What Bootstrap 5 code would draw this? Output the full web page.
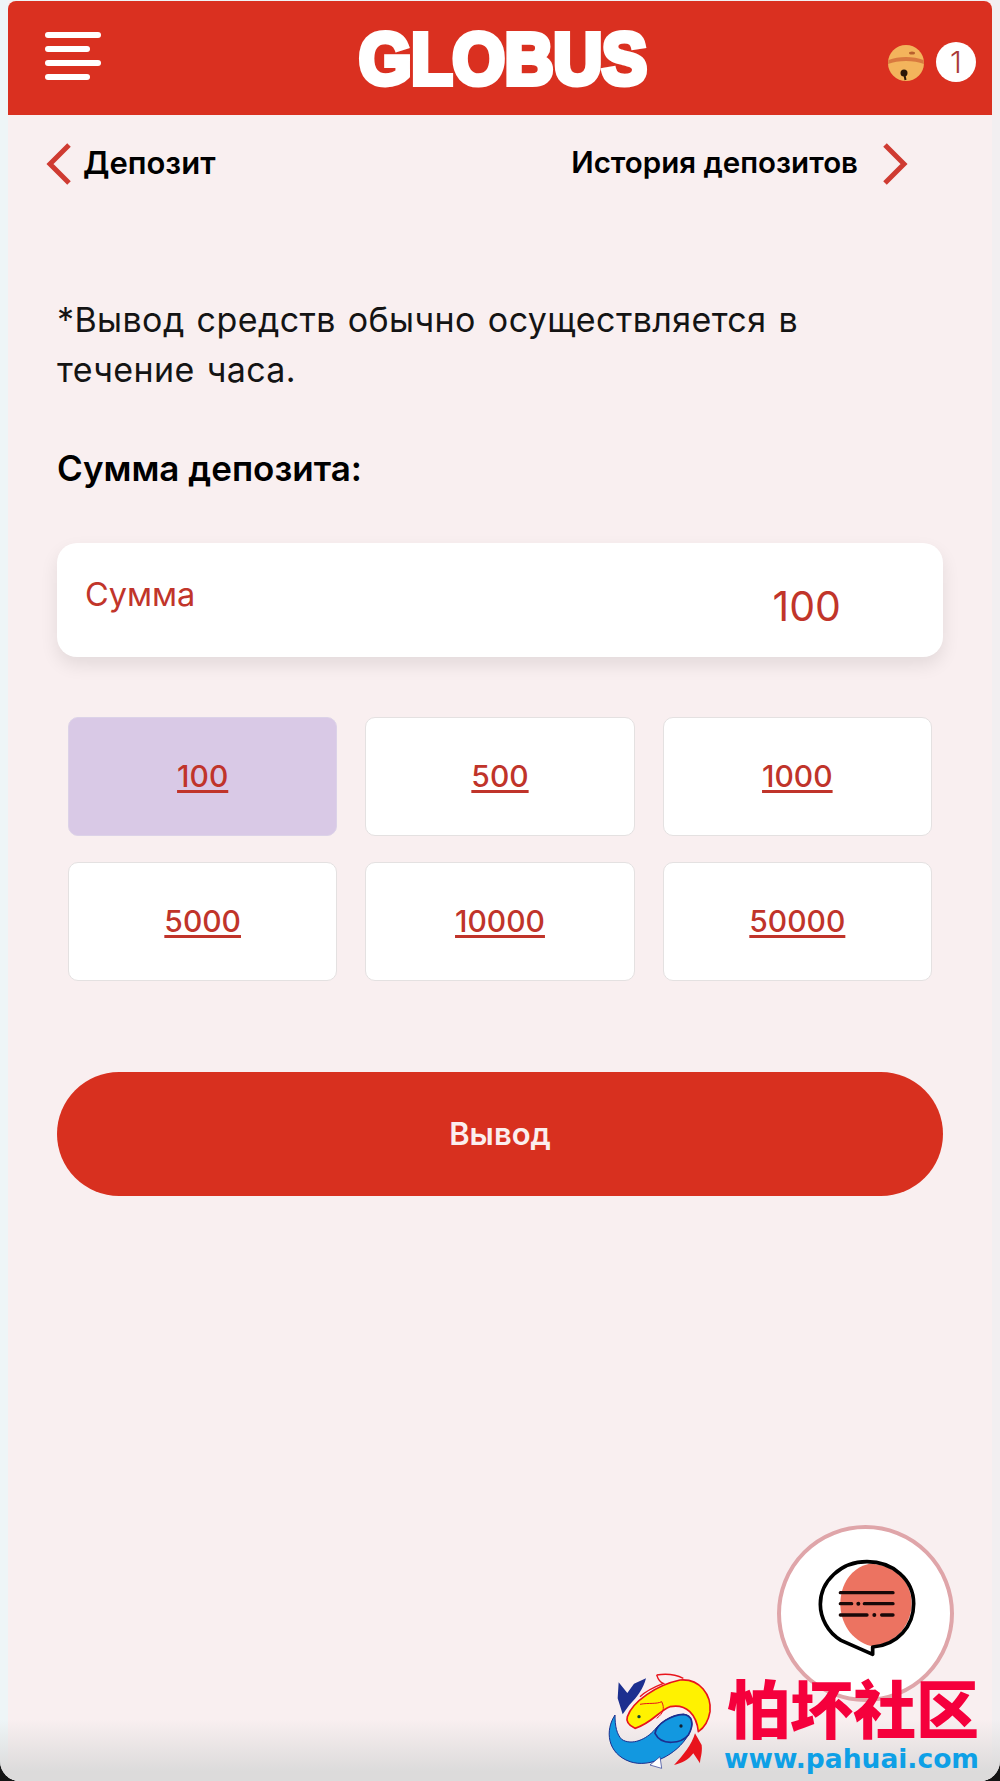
<!DOCTYPE html>
<html lang="ru">
<head>
    <meta charset="UTF-8">
    <meta name="viewport" content="width=device-width, initial-scale=1.0">
    <title>Вывод</title>
    <link href="https://cdn.jsdelivr.net/npm/bootstrap@5.3.0/dist/css/bootstrap.min.css" rel="stylesheet">
    <style>
        html, body { margin: 0; height: 1781px; background: #141414; }
        body { font-family: Inter, "Liberation Sans", sans-serif; overflow: hidden; }
        .app-shell {
            position: relative;
            height: 1781px;
            padding: 1px 8px 0;
            overflow: hidden;
            border-radius: 0 0 20px 20px;
            background: linear-gradient(to right, #eef5f7 0, #eef5f7 8px, #f2eff1 992px);
        }
        .app-screen { height: 100%; background: #f9eff0; }
        .bottom-fade {
            position: absolute; left: 0; right: 0; bottom: 0; height: 62px;
            background: linear-gradient(to bottom, rgba(222,220,220,0), #dcdbdb 85%);
            pointer-events: none;
        }
        .app-header {
            height: 114px; padding: 0 16px 0 37px;
            background: #da3020;
            border-radius: 8px 8px 0 0;
        }
        .burger { width: 56px; gap: 8px; margin-bottom: 5px; }
        .burger span { display: block; height: 6px; border-radius: 3px; background: #fff; }
        .burger span:nth-child(even) { width: 45px; }
        .brand-logo { width: 300px; height: 100px; margin-left: 252px; }
        .brand-logo text { font-family: "Liberation Sans", sans-serif; font-weight: 700; font-size: 72px; }
        .bell-icon { width: 38px; height: 38px; }
        .alert-group { margin-top: 8px; }
        .count-dot {
            width: 40px; height: 40px; margin-left: 11px;
            background: #fff; color: #a83a38; font-size: 30px; font-weight: 300; line-height: 1;
        }
        .sub-nav { padding: 27px 84px 0 38px; height: 86px; color: #000; font-size: 29.5px; font-weight: 600; line-height: 41px; }
        .sub-nav svg { width: 26px; height: 44px; flex: none; }
        .nav-back { margin-left: 7px; font-size: 31px; }
        .page-body { padding: 0 49px; }
        .note-text { margin: 94px 0 0; font-size: 34px; line-height: 50px; color: #141414; letter-spacing: .4px; word-spacing: 2px; }
        .sum-title { margin: 53px 0 0; font-size: 35px; line-height: 40px; font-weight: 600; color: #000; }
        .sum-box {
            height: 114px; margin-top: 55px; padding: 0 102px 0 28px;
            background: #fff; border-radius: 20px;
            box-shadow: 0 8px 18px rgba(0, 0, 0, .09);
            color: #c1352a;
        }
        .sum-label { font-size: 32.5px; margin-top: 32px; line-height: 40px; }
        .sum-value { font-size: 41px; margin-top: 38px; line-height: 50px; }
        .amount-grid { --bs-gutter-x: 28px; --bs-gutter-y: 26px; margin-top: 34px; padding: 0 11px; }
        .amount-btn {
            display: flex; align-items: center; justify-content: center;
            height: 119px; background: #fff;
            border: 1px solid #e4e1e1; border-radius: 10px;
            color: #c0342a; font-size: 30px; font-weight: 500;
            text-decoration: underline; text-decoration-thickness: 3px; text-underline-offset: 3px;
        }
        .amount-btn:hover { color: #c0342a; }
        .amount-btn.is-picked { background: #d9c9e6; border-color: #dcd2e8; }
        .cash-out {
            display: block; width: 100%; height: 124px; margin-top: 91px;
            background: #d8301f; border: 0; border-radius: 62px;
            color: #fbeeee; font-size: 31px; font-weight: 600;
        }
        .chat-fab {
            position: absolute; left: 777px; top: 1525px;
            width: 177px; height: 177px;
            background: #fff; border: 4px solid #dfa5a9;
        }
        .chat-fab svg { width: 130px; height: 120px; margin-bottom: 6px; }
        .site-mark { position: absolute; left: 600px; top: 1665px; width: 392px; height: 114px; }
        .fish-logo { position: absolute; left: 0; top: 0; width: 125px; height: 110px; }
        .mark-cn {
            position: absolute; left: 127px; top: 9px;
            font-family: "Noto Sans CJK SC", sans-serif; font-weight: 900;
            font-size: 63px; line-height: 64px; color: #f5003c; white-space: nowrap;
        }
        .mark-url {
            position: absolute; left: 124px; top: 76px;
            font-family: "DejaVu Sans", sans-serif; font-weight: 700;
            font-size: 26.5px; line-height: 36px; color: #0ea0e6; white-space: nowrap;
        }
    </style>
</head>
<body>
    <div class="app-shell">
        <div class="app-screen">
            <header class="app-header d-flex align-items-center">
                <div class="burger d-flex flex-column"><span></span><span></span><span></span><span></span></div>
                <svg class="brand-logo" viewBox="0 0 300 100">
                    <text x="150" y="76" text-anchor="middle" textLength="288" lengthAdjust="spacingAndGlyphs" fill="#fff" stroke="#fff" stroke-width="6" stroke-linejoin="miter">GLOBUS</text>
                </svg>
                <div class="alert-group ms-auto d-flex align-items-center">
                    <svg class="bell-icon" viewBox="0 0 38 38">
                        <path d="M10 5l4 3M28 5l-4 3" stroke="#a5452a" stroke-width="1.2"/>
                        <circle cx="19" cy="20" r="18" fill="#f3b45c"/>
                        <path d="M1.500 17c10-4 25-4 35 0l.5 4c-10-4-26-4-36 0z" fill="#d9793f"/>
                        <ellipse cx="25" cy="10" rx="3" ry="1.500" fill="#b8602e"/>
                        <circle cx="17" cy="30" r="3.500" fill="#2b1608"/>
                        <path d="M17 30l1.500 7" stroke="#2b1608" stroke-width="2"/>
                    </svg>
                    <span class="count-dot rounded-circle d-flex align-items-center justify-content-center">1</span>
                </div>
            </header>

            <nav class="sub-nav d-flex align-items-start">
                <svg viewBox="0 0 26 44"><path d="M23 3L4 22l19 19" fill="none" stroke="#cf3b32" stroke-width="5"/></svg>
                <span class="nav-back ps-1">Депозит</span>
                <span class="ms-auto me-4">История депозитов</span>
                <svg viewBox="0 0 26 44"><path d="M3 3l19 19L3 41" fill="none" stroke="#cf3b32" stroke-width="5"/></svg>
            </nav>

            <main class="page-body">
                <p class="note-text">*Вывод средств обычно осуществляется в<br>течение часа.</p>
                <p class="sum-title">Сумма депозита:</p>

                <div class="sum-box d-flex justify-content-between align-items-start">
                    <span class="sum-label">Сумма</span>
                    <span class="sum-value">100</span>
                </div>

                <div class="row row-cols-3 amount-grid">
                    <div class="col"><a class="amount-btn is-picked" href="#">100</a></div>
                    <div class="col"><a class="amount-btn" href="#">500</a></div>
                    <div class="col"><a class="amount-btn" href="#">1000</a></div>
                    <div class="col"><a class="amount-btn" href="#">5000</a></div>
                    <div class="col"><a class="amount-btn" href="#">10000</a></div>
                    <div class="col"><a class="amount-btn" href="#">50000</a></div>
                </div>

                <button type="button" class="cash-out">Вывод</button>
            </main>
        </div>

        <div class="bottom-fade"></div>

        <div class="chat-fab rounded-circle d-flex align-items-center justify-content-center">
            <svg viewBox="0 0 390 360">
                <path d="M205 38C150 50 118 100 118 158c0 57 32 110 92 127 75-7 120-60 122-127 0-68-52-118-127-120z" fill="#ec7361"/>
                <path d="M215 288c75-6 123-63 123-130 0-73-63-126-140-126-78 0-140 58-140 128 0 40 22 85 62 108l95 42z" fill="none" stroke="#000" stroke-width="11" stroke-linejoin="round"/>
                <path d="M118 125h158M118 158h34M190 158h86M118 192h80M242 192h34" stroke="#180808" stroke-width="10" stroke-linecap="round" fill="none"/>
                <circle cx="172" cy="158" r="6" fill="#180808"/>
                <circle cx="220" cy="192" r="6" fill="#180808"/>
            </svg>
        </div>

        <div class="site-mark">
            <svg class="fish-logo" viewBox="0 0 375 330">
                <path d="M68 148L53 100l3-48 26 32 20-28 36-16c-8 30-25 55-50 80z" fill="#1c2f8f"/>
                <path d="M45 150c-30 45-25 115 45 140 60 20 140-20 175-80 20-35 10-60-15-62-35 2-65 20-85 45-25 30-70 50-100 30-15-15-20-40-20-73z" fill="#1298e0" stroke="#1c2f8f" stroke-width="3"/>
                <path d="M165 205c5-30 50-55 85-57 25 2 35 27 15 62-20 25-80 35-100-5z" fill="#1298e0" stroke="#1c2f8f" stroke-width="5"/>
                <path d="M150 300l35 10-5-35z" fill="#fff" stroke="#1c2f8f" stroke-width="2"/>
                <path d="M170 30c5 15 10 22 20 25-30 12-55 25-70 40" fill="none" stroke="#e8141c" stroke-width="4"/>
                <path d="M170 30c30-5 60 0 80 10" fill="none" stroke="#e8141c" stroke-width="4"/>
                <path d="M82 155c15-45 88-95 158-110 60-5 95 45 90 95-5 30-20 50-35 60-5-50-35-85-85-75-30 10-55 50-105 65-20-10-28-20-23-35z" fill="#fff200" stroke="#e8141c" stroke-width="5" stroke-linejoin="round"/>
                <path d="M120 118c25-5 50 0 65-8 10 20 5 35-15 50" fill="none" stroke="#e8141c" stroke-width="3"/>
                <path d="M285 205l20 35c3 25-5 40-5 55l-20-30c-15 20-35 30-58 35 28-30 53-60 63-95z" fill="#e8141c"/>
                <circle cx="117" cy="155" r="5" fill="#143"/>
                <circle cx="243" cy="183" r="5" fill="#123"/>
            </svg>
            <div class="mark-cn">怕坏社区</div>
            <div class="mark-url">www.pahuai.com</div>
        </div>
    </div>
    <script src="https://cdn.jsdelivr.net/npm/bootstrap@5.3.0/dist/js/bootstrap.bundle.min.js"></script>
</body>
</html>
